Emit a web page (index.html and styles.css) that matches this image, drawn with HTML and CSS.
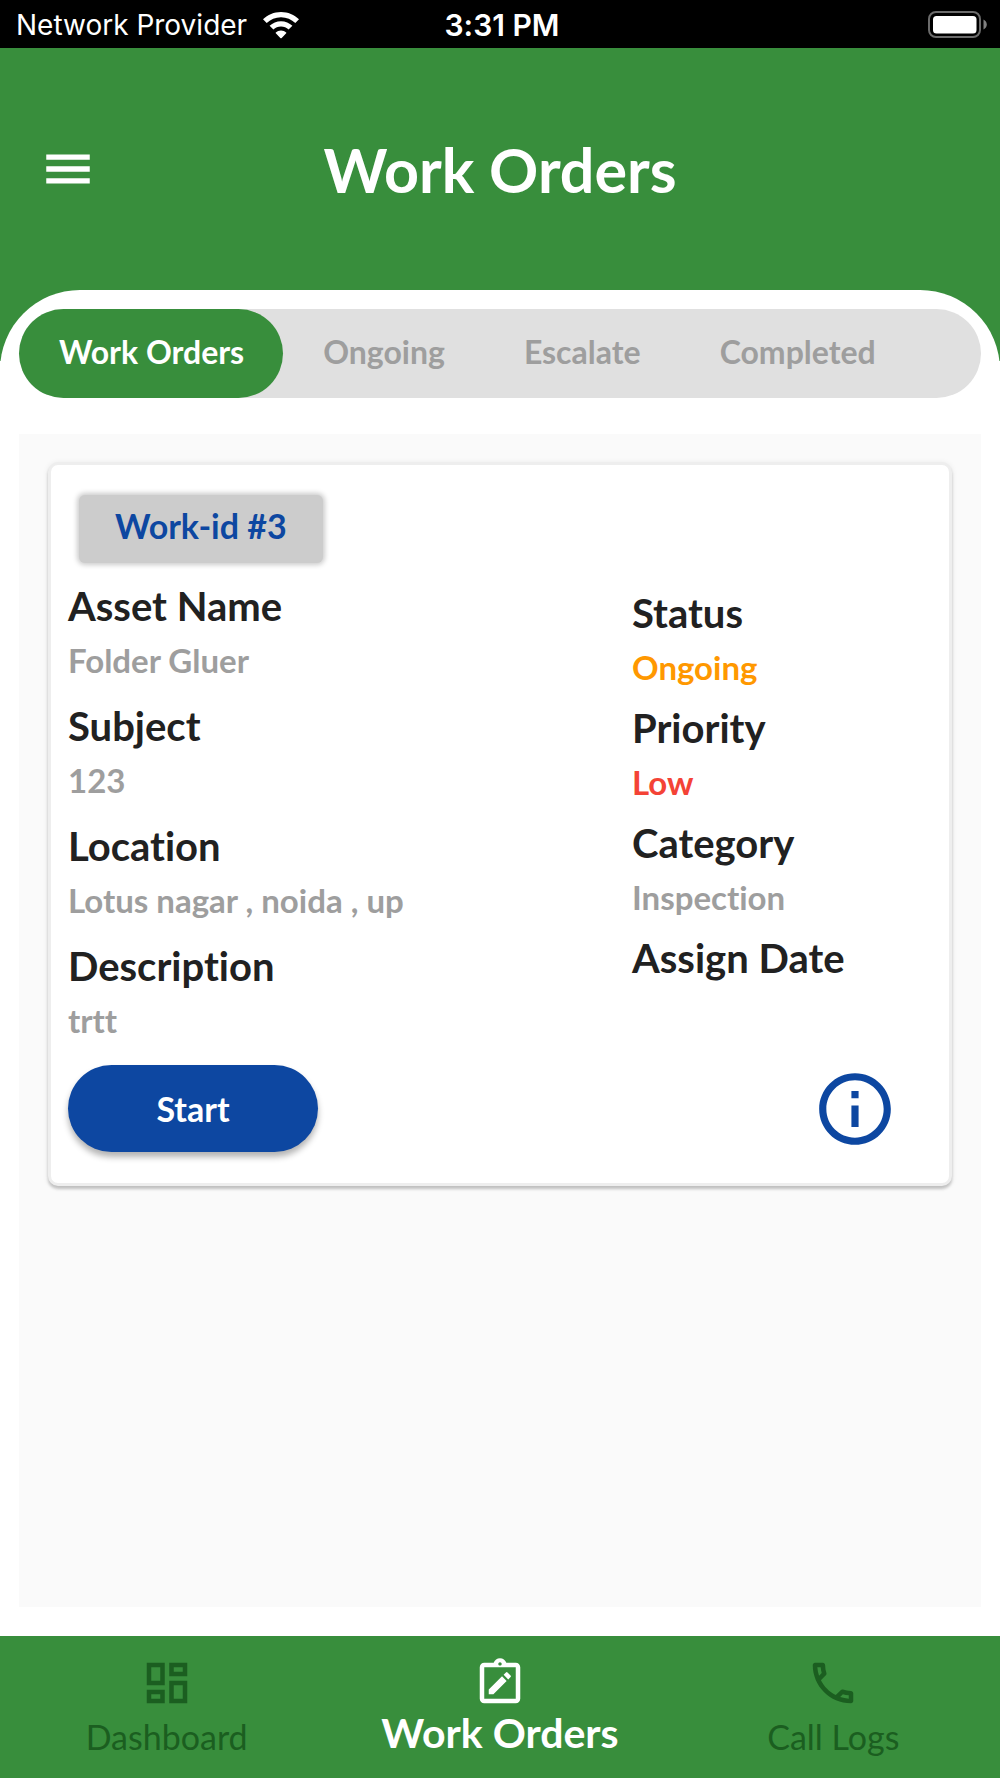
FILE: index.html
```html
<!DOCTYPE html>
<html lang="en">
<head>
  <meta charset="utf-8">
  <meta name="viewport" content="width=device-width, initial-scale=1">
  <title>Work Orders</title>
  <link rel="stylesheet" href="styles.css">
</head>
<body>
  <div class="app">
    <div class="status-bar">
      <div class="carrier">
        <span>Network Provider</span>
        <svg class="wifi" viewBox="0 0 36 27" aria-hidden="true">
          <path d="M18 0C11 0 4.700 2.800 0 7.300L3.700 11.100C7.400 7.500 12.500 5.300 18 5.300S28.600 7.500 32.300 11.100L36 7.300C31.300 2.800 25 0 18 0Z"/>
          <path d="M18 9.200C13.600 9.200 9.600 10.900 6.600 13.800L10.400 17.600C12.400 15.700 15.100 14.600 18 14.600S23.600 15.700 25.600 17.600L29.400 13.800C26.400 10.900 22.400 9.200 18 9.200Z"/>
          <path d="M18 18.400C16 18.400 14.200 19.100 12.800 20.400Q12.400 20.800 12.800 21.200L17.300 26Q18 26.700 18.700 26L23.200 21.200Q23.600 20.800 23.200 20.400C21.800 19.100 20 18.400 18 18.400Z"/>
        </svg>
      </div>
      <span class="clock">3:31 PM</span>
      <svg class="battery" viewBox="0 0 60 28" aria-hidden="true">
        <rect x="1" y="1" width="51" height="25" rx="7" fill="none" stroke="#6b6b6b" stroke-width="2"/>
        <rect x="5" y="5" width="43.500" height="17.500" rx="3.500" fill="#fff"/>
        <path d="M55.500 8.500C57.500 9.500 58.800 11.300 58.800 13.500S57.500 17.500 55.500 18.500Z" fill="#808080"/>
      </svg>
    </div>

    <header class="header">
      <button class="menu" type="button" aria-label="Open menu">
        <svg viewBox="0 0 24 24" aria-hidden="true"><path d="M3 18h18v-2.200H3V18zm0-4.900h18v-2.200H3v2.200zM3 6v2.200h18V6H3z"/></svg>
      </button>
      <h1 class="title">Work Orders</h1>
    </header>

    <main class="sheet">
      <div class="tabs" role="tablist">
        <button class="tab tab-active" type="button" role="tab" aria-selected="true">Work Orders</button>
        <button class="tab" type="button" role="tab" aria-selected="false">Ongoing</button>
        <button class="tab" type="button" role="tab" aria-selected="false">Escalate</button>
        <button class="tab" type="button" role="tab" aria-selected="false">Completed</button>
      </div>

      <div class="list">
        <article class="card">
          <h2 class="chip">Work-id #3</h2>
          <div class="details">
            <dl class="column">
              <div class="field"><dt>Asset Name</dt><dd>Folder Gluer</dd></div>
              <div class="field"><dt>Subject</dt><dd>123</dd></div>
              <div class="field"><dt>Location</dt><dd>Lotus nagar , noida , up</dd></div>
              <div class="field"><dt>Description</dt><dd>trtt</dd></div>
            </dl>
            <dl class="column column-side">
              <div class="field"><dt>Status</dt><dd class="ongoing">Ongoing</dd></div>
              <div class="field"><dt>Priority</dt><dd class="low">Low</dd></div>
              <div class="field"><dt>Category</dt><dd>Inspection</dd></div>
              <div class="field"><dt>Assign Date</dt><dd></dd></div>
            </dl>
          </div>
          <div class="actions">
            <button class="start" type="button">Start</button>
            <button class="info" type="button" aria-label="Work order details">
              <svg viewBox="0 0 24 24" aria-hidden="true"><path d="M11 7h2v2h-2zm0 4h2v6h-2zm1-9C6.480 2 2 6.480 2 12s4.480 10 10 10 10-4.480 10-10S17.520 2 12 2zm0 18c-4.410 0-8-3.590-8-8s3.590-8 8-8 8 3.590 8 8-3.590 8-8 8z"/></svg>
            </button>
          </div>
        </article>
      </div>
    </main>

    <nav class="nav">
      <a class="nav-item" href="#dashboard">
        <svg viewBox="0 0 24 24" aria-hidden="true"><path d="M19 5v2h-4V5h4M9 5v6H5V5h4m10 8v6h-4v-6h4M9 17v2H5v-2h4M21 3h-8v6h8V3zM11 3H3v10h8V3zm10 8h-8v10h8V11zm-10 4H3v6h8v-6z"/></svg>
        <span>Dashboard</span>
      </a>
      <a class="nav-item nav-active" href="#work-orders" aria-current="page">
        <svg viewBox="0 0 24 24" aria-hidden="true"><path fill-rule="evenodd" d="M19 3h-4.180C14.400 1.840 13.300 1 12 1s-2.400.840-2.820 2H5c-1.100 0-2 .900-2 2v14c0 1.100.900 2 2 2h14c1.100 0 2-.900 2-2V5c0-1.100-.900-2-2-2zm-7-.250c.410 0 .750.340.750.750s-.340.750-.750.750-.750-.340-.750-.750.340-.750.750-.750zM19 19H5V5h14v14z"/><path d="M7 14.940V17h2.060l5.900-5.900-2.060-2.060zM16.700 9.360a.500.500 0 0 0 0-.700l-1.360-1.360a.500.500 0 0 0-.700 0L13.600 8.340l2.060 2.060z"/></svg>
        <span>Work Orders</span>
      </a>
      <a class="nav-item" href="#call-logs">
        <svg viewBox="0 0 24 24" aria-hidden="true"><path d="M6.540 5c.060.890.210 1.760.450 2.590l-1.200 1.200c-.410-1.200-.670-2.470-.760-3.790h1.510m9.860 12.020c.850.240 1.720.390 2.600.450v1.490c-1.320-.090-2.590-.350-3.800-.750l1.200-1.190M7.500 3H4c-.550 0-1 .450-1 1 0 9.390 7.610 17 17 17 .550 0 1-.450 1-1v-3.490c0-.550-.450-1-1-1-1.240 0-2.450-.200-3.570-.570-.100-.040-.210-.050-.310-.050-.260 0-.510.100-.710.290l-2.200 2.200c-2.830-1.450-5.150-3.760-6.590-6.590l2.200-2.200c.280-.280.360-.670.250-1.020C8.700 6.450 8.500 5.250 8.500 4c0-.550-.450-1-1-1z"/></svg>
        <span>Call Logs</span>
      </a>
    </nav>
  </div>
</body>
</html>
```

FILE: styles.css
```css
* {
  box-sizing: border-box;
}

body {
  margin: 0;
  background: #fff;
  font-family: Lato, "Liberation Sans", sans-serif;
  font-size: 33px;
  font-weight: 700;
  font-variant-ligatures: none;
  color: #212121;
}

h1,
h2,
dl,
dd {
  margin: 0;
}

button {
  border: 0;
  padding: 0;
  background: none;
  font: inherit;
  font-variant-ligatures: none;
  cursor: pointer;
}

svg {
  display: block;
  fill: currentColor;
}

.app {
  display: flex;
  flex-direction: column;
  min-height: 100vh;
}

/* Device status bar */
.status-bar {
  display: grid;
  grid-template-columns: 1fr auto 1fr;
  align-items: center;
  height: 48px;
  padding: 2px 12px 0 16px;
  background: #000;
  color: #fff;
  font-family: Inter, "Liberation Sans", sans-serif;
  font-size: 28px;
  font-weight: 400;
}

.carrier {
  display: flex;
  align-items: center;
  gap: 16px;
}

.wifi {
  width: 36px;
  height: 27px;
}

.clock {
  font-size: 30px;
  font-weight: 600;
}

.battery {
  width: 60px;
  height: 28px;
  justify-self: end;
}

/* Header */
.header {
  display: grid;
  grid-template-columns: 1fr auto 1fr;
  align-items: center;
  height: 313px;
  padding: 0 39px 71px;
  background: #388e3c;
  color: #fff;
}

.menu {
  width: 58px;
  height: 58px;
  color: inherit;
}

.title {
  padding-top: 2px;
  font-size: 61px;
  font-weight: 700;
  line-height: 72px;
}

/* Sheet that overlaps the header */
.sheet {
  display: flex;
  flex: 1;
  flex-direction: column;
  gap: 36px;
  margin-top: -71px;
  padding: 19px 19px 29px;
  border-radius: 80px 80px 0 0;
  background: #fff;
}

.tabs {
  display: flex;
  height: 89px;
  border-radius: 45px;
  background: #e0e0e0;
}

.tab {
  padding: 0 39px 4px 40px;
  border-radius: 45px;
  color: #9e9e9e;
  font-size: 32px;
}

.tab-active {
  background: #388e3c;
  color: #fff;
}

.list {
  flex: 1;
  padding: 28px 29px 29px;
  background: #fafafa;
}

/* Work order card */
.card {
  padding: 30px 17px 31px;
  border: 3px solid #eee;
  border-radius: 10px;
  background: #fff;
  box-shadow: 0 3px 3px rgba(0, 0, 0, 0.2), 0 1px 6px rgba(0, 0, 0, 0.08);
}

.chip {
  width: fit-content;
  margin: 0 11px;
  padding: 11px 36px 17px;
  border-radius: 6px;
  background: #ccc;
  box-shadow: 0 0 5px 2px #ccc;
  color: #0d47a1;
  font-size: 34px;
  font-weight: 700;
  line-height: 40px;
}

.details {
  display: grid;
  grid-template-columns: 47fr 25fr;
  padding-top: 19px;
}

.column {
  display: flex;
  flex-direction: column;
  gap: 21px;
}

.column-side {
  gap: 16px;
  padding-top: 7px;
}

.field {
  display: flex;
  flex-direction: column;
  gap: 10px;
}

dt {
  font-size: 40px;
  line-height: 48px;
}

dd {
  min-height: 41px;
  color: #9e9e9e;
  line-height: 41px;
}

.ongoing {
  color: #ff9800;
}

.low {
  color: #f44336;
}

.actions {
  display: flex;
  align-items: center;
  justify-content: space-between;
  padding: 24px 34px 0 0;
}

.start {
  width: 250px;
  height: 87px;
  border-radius: 44px;
  background: #0d47a1;
  box-shadow: 0 5px 6px rgba(0, 0, 0, 0.3);
  color: #fff;
  font-size: 34px;
}

.info {
  width: 86px;
  height: 86px;
  color: #0d47a1;
}

/* Bottom navigation */
.nav {
  display: grid;
  grid-template-columns: repeat(3, 1fr);
  height: 142px;
  background: #388e3c;
}

.nav-item {
  display: flex;
  flex-direction: column;
  align-items: center;
  gap: 6px;
  padding-top: 20px;
  color: #1b5e20;
  font-size: 34px;
  font-weight: 400;
  line-height: 41px;
  text-decoration: none;
}

.nav-item svg {
  width: 54px;
  height: 54px;
}

.nav-active {
  gap: 0;
  color: #fff;
  font-size: 41px;
  font-weight: 700;
  line-height: 46px;
}
```
